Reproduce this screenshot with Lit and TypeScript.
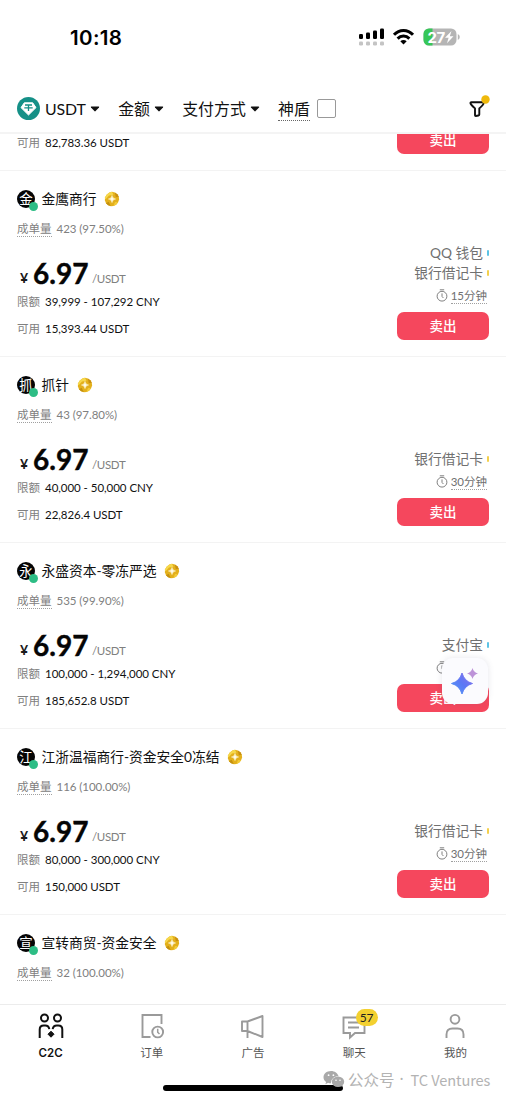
import { LitElement, html, css, svg, nothing } from "lit";
import { customElement, property } from "lit/decorators.js";

interface Method { name: string; color: string; }
interface Offer {
  name: string;
  orders: string;
  limit: string;
  available: string;
  methods: Method[];
  minutes: number;
}

const BLUE = "#5cc3e6";
const YELLOW = "#f3d04e";

const offers: Offer[] = [
  { name: "金鹰商行", orders: "423 (97.50%)", limit: "39,999 - 107,292 CNY", available: "15,393.44 USDT",
    methods: [{ name: "QQ 钱包", color: BLUE }, { name: "银行借记卡", color: YELLOW }], minutes: 15 },
  { name: "抓针", orders: "43 (97.80%)", limit: "40,000 - 50,000 CNY", available: "22,826.4 USDT",
    methods: [{ name: "银行借记卡", color: YELLOW }], minutes: 30 },
  { name: "永盛资本-零冻严选", orders: "535 (99.90%)", limit: "100,000 - 1,294,000 CNY", available: "185,652.8 USDT",
    methods: [{ name: "支付宝", color: BLUE }], minutes: 15 },
  { name: "江浙温福商行-资金安全0冻结", orders: "116 (100.00%)", limit: "80,000 - 300,000 CNY", available: "150,000 USDT",
    methods: [{ name: "银行借记卡", color: YELLOW }], minutes: 30 },
];

const caret = html`<svg class="caret" width="10" height="6" viewBox="0 0 10 6"><path d="M1.4.6h7.2q1 0 .4.8L5.6 5.1q-.6.6-1.2 0L1 1.4Q.4.6 1.4.6z" fill="#111"/></svg>`;

const medal = html`<svg width="16" height="16" viewBox="0 0 16 16">
  <path d="M5.4 1.4 8 .8l2.9.8 2.4 1.6 1.5 2.6.3 2.6-1 2.900-2 2.400-2.600 1.400-2.700.1-2.700-.9-2.100-2L.9 9.600l.1-3L2.600 3.700z" fill="#e3b01c"/>
  <path d="M5.400 1.400 8 .8l1.500 3-4.500.6-2.700 3L.9 8.200 1 6.600 2.600 3.700z" fill="#f6d84c"/>
  <path d="M10.900 1.600l2.400 1.600 1.500 2.600-3 .4z" fill="#c98f10"/>
  <path d="M2 12.300l2.600-1.500 2.200 4.300-2.700-.8z" fill="#c4900f"/>
  <path d="M11 11l3.100.3-2 2.400-2.600 1.400z" fill="#f3cb38"/>
  <path d="M8 4.400q.4 3.200 3.600 3.600Q8.400 8.400 8 11.600 7.600 8.400 4.400 8 7.600 7.600 8 4.400z" fill="#fffbe6" stroke="#fffbe6" stroke-width=".5"/>
</svg>`;

const clock = html`<svg width="12" height="13" viewBox="0 0 12 13" fill="none" stroke="#808080" stroke-width="1">
  <circle cx="6" cy="7.200" r="4.900"/><path d="M3.800.8h4.400M6 4.400v3l1.400 1.600"/>
</svg>`;

const font = css`"Lato", "Noto Sans CJK SC", sans-serif`;

@customElement("offer-card")
class OfferCard extends LitElement {
  @property({ attribute: false }) offer?: Offer;
  @property() available = "";

  static styles = css`
    :host { display: block; flex: none; font-family: ${font}; color: #1a1a1a; }
    .card { box-sizing: border-box; height: 186px; padding: 0 17px 0 17px; border-bottom: 1px solid #f3f3f3;
      display: flex; justify-content: space-between; white-space: nowrap; }
    .card.tail { height: 37px; align-items: flex-end; }
    .left { padding-top: 17px; }
    .tail .left { padding: 0 0 18px; }
    .head { display: flex; align-items: center; height: 22px; }
    .avatar { position: relative; width: 18px; height: 18px; border-radius: 50%; background: #050505; color: #fff;
      font-size: 13.500px; line-height: 18px; text-align: center; }
    .dot { position: absolute; left: 12px; top: 12px; width: 9px; height: 9px; border-radius: 50%; background: #2dbd85; }
    .name { font-size: 13.750px; margin: 0 7.500px 0 6.500px; line-height: 22px; color: #111; }
    .stat { display: flex; align-items: center; height: 18px; margin-top: 10px; font-size: 11.500px; color: #808080; }
    .under { border-bottom: 1px dotted #a0a0a0; line-height: 15px; height: 15px; }
    .stat .num { margin-left: 5px; letter-spacing: -.04px; padding-bottom: 1px; }
    .price { display: flex; align-items: baseline; height: 36px; line-height: 36px; margin-top: 17px; padding-left: 3px; }
    .yen { font-size: 14px; font-weight: 700; width: 13px; position: relative; top: -1px; }
    .val { font-size: 28px; font-weight: 700; color: #050505; -webkit-text-stroke: .4px #050505; }
    .unit { font-size: 11.500px; letter-spacing: -.3px; color: #808080; margin-left: 3.500px; position: relative; top: -1px; }
    .row { display: flex; height: 18px; line-height: 18px; font-size: 11.500px; margin-top: 2px; }
    .row + .row { margin-top: 8.500px; }
    .row .num { letter-spacing: -.04px; color: #111; }
    .tail .row { margin: 0; }
    .label { color: #808080; width: 28px; }
    .right { display: flex; flex-direction: column; align-items: flex-end; justify-content: flex-end; padding-bottom: 16px; }
    .pay { display: flex; align-items: center; height: 20px; line-height: 20px; font-size: 13.750px; color: #707070; }
    .chip { width: 2px; height: 6px; border-radius: 1px; margin-left: 4px; }
    .time { display: flex; align-items: center; height: 16px; gap: 3px; margin: 5px 2px 8.500px 0; font-size: 11.500px; color: #707070; }
    .sell { width: 92px; height: 28px; border-radius: 7px; background: #f5475d; color: #fff; font-size: 13.500px;
      line-height: 28px; text-align: center; font-weight: 500; }
  `;

  render() {
    const o = this.offer;
    if (!o) {
      return html`<div class="card tail">
        <div class="left"><div class="row"><span class="label">可用</span><span class="num">${this.available}</span></div></div>
        <div class="right"><div class="sell">卖出</div></div>
      </div>`;
    }
    return html`<div class="card">
      <div class="left">
        <div class="head"><div class="avatar">${o.name[0]}<i class="dot"></i></div><span class="name">${o.name}</span>${medal}</div>
        <div class="stat"><span class="under">成单量</span><span class="num">${o.orders}</span></div>
        ${o.limit ? html`
          <div class="price"><span class="yen">¥</span><span class="val">6.97</span><span class="unit">/USDT</span></div>
          <div class="row"><span class="label">限额</span><span class="num">${o.limit}</span></div>
          <div class="row"><span class="label">可用</span><span class="num">${o.available}</span></div>` : nothing}
      </div>
      ${o.limit ? html`<div class="right">
        ${o.methods.map((m) => html`<div class="pay">${m.name}<i class="chip" style="background:${m.color}"></i></div>`)}
        <div class="time">${clock}<span class="under">${o.minutes}分钟</span></div>
        <div class="sell">卖出</div>
      </div>` : nothing}
    </div>`;
  }
}

const tabIcons = {
  c2c: svg`<g fill="none" stroke="#111" stroke-width="2"><circle cx="7.500" cy="5" r="3.500"/><circle cx="20.500" cy="5" r="3.500"/>
    <path d="M2.700 25v-8.500q0-4 4-4h1.600q3.400 0 4 3.600M25.300 25v-8.500q0-4-4-4h-1.600q-3.400 0-4 3.600"/></g>
    <path d="M14 18.200l3 3-3 3-3-3z" fill="#111" stroke="#111" stroke-linejoin="round"/>`,
  order: svg`<g fill="none" stroke="#9a9a9a" stroke-width="1.900"><path d="M23.500 11V2H4.500v22h8"/><circle cx="19.700" cy="19" r="5.400"/><path d="M19.700 15.800v3.500l1.800 1.700" stroke-width="1.500"/></g>`,
  ad: svg`<g fill="none" stroke="#9a9a9a" stroke-width="1.900" stroke-linejoin="round"><path d="M8.500 8.500 23.500 3v21L8.500 18H3v-9.500zM8.500 8.500V25"/></g>`,
  chat: svg`<g fill="none" stroke="#9a9a9a" stroke-width="1.900"><path d="M3.500 4.500h21v15.500H15l-5 4.500v-4.500H3.500zM8 9.500h11M8 14.500h11"/></g>`,
  me: svg`<g fill="none" stroke="#9a9a9a" stroke-width="1.900"><circle cx="14" cy="6.300" r="4.400"/><path d="M5.500 25v-3.500q0-6 6-6h5q6 0 6 6v3.500"/></g>`,
};

const tabs = [
  { icon: tabIcons.c2c, label: "C2C", active: true },
  { icon: tabIcons.order, label: "订单" },
  { icon: tabIcons.ad, label: "广告" },
  { icon: tabIcons.chat, label: "聊天", badge: "57" },
  { icon: tabIcons.me, label: "我的" },
];

@customElement("app-root")
class AppRoot extends LitElement {
  static styles = css`
    :host { display: flex; flex-direction: column; position: relative; width: 506px; height: 1100px; overflow: hidden;
      background: #fff; font-family: ${font}; color: #111; white-space: nowrap; }
    svg { display: block; }
    .status { flex: none; height: 74px; display: flex; justify-content: space-between; padding: 0 46px 0 70px; align-items: center; box-sizing: border-box; }
    .clock { font-family: Inter, sans-serif; font-weight: 600; font-size: 20.500px; letter-spacing: .35px; padding-top: 1px; color: #000; }
    .filters { flex: none; box-sizing: border-box; height: 60px; border-bottom: 2px solid #f4f4f4; display: flex; align-items: center;
      padding: 11px 17px 0; font-size: 15.900px; }
    .filters .ticker { margin-left: 5px; letter-spacing: -.1px; }
    .filters .caret { margin: 0 18.300px 0 4px; }
    .shield { border-bottom: 1px dotted #666; line-height: 22px; height: 22px; margin-top: 1px; }
    .box { width: 17px; height: 17px; border: 1px solid #999; border-radius: 2px; margin-left: 7px; }
    .funnel { margin-left: auto; margin-right: -2px; margin-top: -5px; }
    .list { flex: 1; min-height: 0; overflow: hidden; display: flex; flex-direction: column; }
    .nav { flex: none; height: 96px; box-sizing: border-box; border-top: 1px solid #ececec; display: grid;
      grid-template-columns: repeat(5, 1fr); align-content: start; padding-top: 8px; background: #fff; }
    .tab { display: flex; flex-direction: column; align-items: center; font-size: 11.500px; color: #555; line-height: 16px; gap: 4.500px; position: relative; }
    .tab.active { color: #111; font-family: Inter, sans-serif; font-weight: 600; font-size: 11.500px; }
    .badge { position: absolute; left: 52px; top: -4px; width: 22px; height: 17px; border-radius: 9px; background: #f3d02f;
      color: #222; font: 12px/17px ${font}; text-align: center; }
    .home { position: absolute; left: 163px; top: 1085px; width: 180px; height: 6px; border-radius: 3px; background: #000; }
    .mark { position: absolute; left: 323px; top: 1068px; display: flex; align-items: center; height: 22px; color: #b3b3b3; font-size: 15.500px;
      font-family: "Noto Sans CJK SC", sans-serif; }
    .mark span { margin-left: 3px; }
    .mark .sep { width: 3px; text-align: center; margin: 0 8px 0 5px; font-family: "Noto Sans", sans-serif; }
    .mark .brand { margin: 0; font-size: 14.600px; letter-spacing: -.1px; }
    .assist { position: absolute; left: 442px; top: 658px; width: 46px; height: 46px; border-radius: 11px; background: #fbfbfe;
      box-shadow: 0 0 6px rgba(80, 80, 110, .14); }
  `;

  render() {
    return html`
      <div class="status">
        <span class="clock">10:18</span>
        <svg width="102" height="20" viewBox="0 0 102 20">
          <g fill="#000"><rect x="1" y="7" width="4" height="5" rx="1.300"/><rect x="8" y="5.500" width="4" height="6.500" rx="1.300"/><rect x="15" y="3.500" width="4" height="8.500" rx="1.300"/><rect x="22" y="1.500" width="4" height="10.500" rx="1.300"/></g>
          <g fill="#c4c4c4"><rect x="1" y="14.500" width="4" height="4" rx="1.200"/><rect x="8" y="14.500" width="4" height="4" rx="1.200"/><rect x="15" y="14.500" width="4" height="4" rx="1.200"/><rect x="22" y="14.500" width="4" height="4" rx="1.200"/></g>
          <g fill="none" stroke="#000" stroke-width="3"><path d="M36 7.700q4-4.300 9.500-4.300t9.500 4.300"/><path d="M39.600 11.600q2.500-2.500 5.900-2.500t5.900 2.500"/></g>
          <path d="M42.300 14.200q3.200-2.300 6.400 0l-3.200 3.400z" fill="#000"/>
          <rect x="65.500" y="1.500" width="33" height="17" rx="5.500" fill="#b5b5b5"/>
          <path d="M74.500 1.500H71a5.500 5.500 0 0 0-5.500 5.500v6a5.500 5.500 0 0 0 5.500 5.500h3.500z" fill="#36c759"/>
          <path d="M99.800 7q2 .8 2 3t-2 3z" fill="#b5b5b5"/>
          <text x="69.500" y="15.500" font-family="Inter, sans-serif" font-weight="700" font-size="15" letter-spacing="-.5" fill="#fff">27</text>
          <path d="M93.500 4l-6.500 6.800h3.600L89 16.200l6.500-6.900h-3.700z" fill="#fff"/>
        </svg>
      </div>
      <div class="filters">
        <svg width="23" height="23" viewBox="0 0 23 23"><circle cx="11.500" cy="11.500" r="11.500" fill="#159087"/>
          <path d="M7.300 5.800h8.400l3.300 4.800-7.500 7.400L4 10.600z" fill="#fff" stroke="#fff" stroke-linejoin="round"/>
          <path d="M8 8h7M11.500 8v6M7.300 10.800h8.400" stroke="#159087" stroke-width="1.300"/></svg>
        <span class="ticker">USDT</span>${caret}
        <span>金额</span>${caret}
        <span>支付方式</span>${caret}
        <span class="shield">神盾</span><i class="box"></i>
        <svg class="funnel" width="24" height="24" viewBox="0 0 24 24">
          <path d="M4.400 8.200h11.200q1.300 0 1 1.200-.2 1.400-4.300 5v6.200q0 .8-.8.9l-2.800.5q-.7 0-.7-.8V14.400q-4-3.600-4.500-5-.3-1.200.9-1.200z" fill="none" stroke="#111" stroke-width="1.900" stroke-linejoin="round"/>
          <circle cx="18.500" cy="5.500" r="4.200" fill="#efb90c"/></svg>
      </div>
      <div class="list">
        <offer-card available="82,783.36 USDT"></offer-card>
        ${offers.map((o) => html`<offer-card .offer=${o}></offer-card>`)}
        <offer-card .offer=${{ name: "宣转商贸-资金安全", orders: "32 (100.00%)", limit: "", available: "", methods: [], minutes: 0 }}></offer-card>
      </div>
      <div class="nav">
        ${tabs.map((t) => html`<div class="tab ${t.active ? "active" : ""}">
          <svg width="28" height="27" viewBox="0 0 28 27">${t.icon}</svg><span>${t.label}</span>
          ${t.badge ? html`<b class="badge">${t.badge}</b>` : nothing}
        </div>`)}
      </div>
      <div class="assist">
        <svg width="46" height="46" viewBox="0 0 46 46">
          <defs><linearGradient id="g" x1="0" y1="1" x2="1" y2="0"><stop offset="0" stop-color="#4f9cf5"/><stop offset=".5" stop-color="#5c78f5"/><stop offset="1" stop-color="#8a6fe8"/></linearGradient></defs>
          <path d="M20 15Q22.500 23.500 30.500 25.500 22.500 27.500 20 36 17.500 27.500 9.500 25.500 17.500 23.500 20 15z" fill="url(#g)" stroke="url(#g)" stroke-linejoin="round"/>
          <path d="M30.500 10Q31.600 14.300 36 15.500 31.600 16.700 30.500 21 29.400 16.700 25 15.500 29.400 14.300 30.500 10z" fill="#bd93d8"/>
        </svg>
      </div>
      <div class="home"></div>
      <div class="mark">
        <svg width="22" height="18" viewBox="0 0 22 18"><path d="M8 1C3.600 1 .5 3.800.5 7.200c0 2 1 3.600 2.600 4.700l-.7 2.300 2.700-1.400q1.500.5 2.900.5C8 9 11 6.300 15.600 6.300 14.800 3.200 11.700 1 8 1z" fill="#a9a9a9"/>
          <ellipse cx="15" cy="11.700" rx="6.200" ry="5.200" fill="#a9a9a9"/><path d="M17.500 15.500l2.300 1.900-.5-2.500z" fill="#a9a9a9"/>
          <g fill="#fff"><circle cx="5.600" cy="5.200" r=".9"/><circle cx="10.400" cy="5.200" r=".9"/><circle cx="13" cy="10.200" r=".8"/><circle cx="17" cy="10.200" r=".8"/></g></svg>
        <span>公众号</span><span class="sep">·</span><span class="brand">TC Ventures</span>
      </div>`;
  }
}
